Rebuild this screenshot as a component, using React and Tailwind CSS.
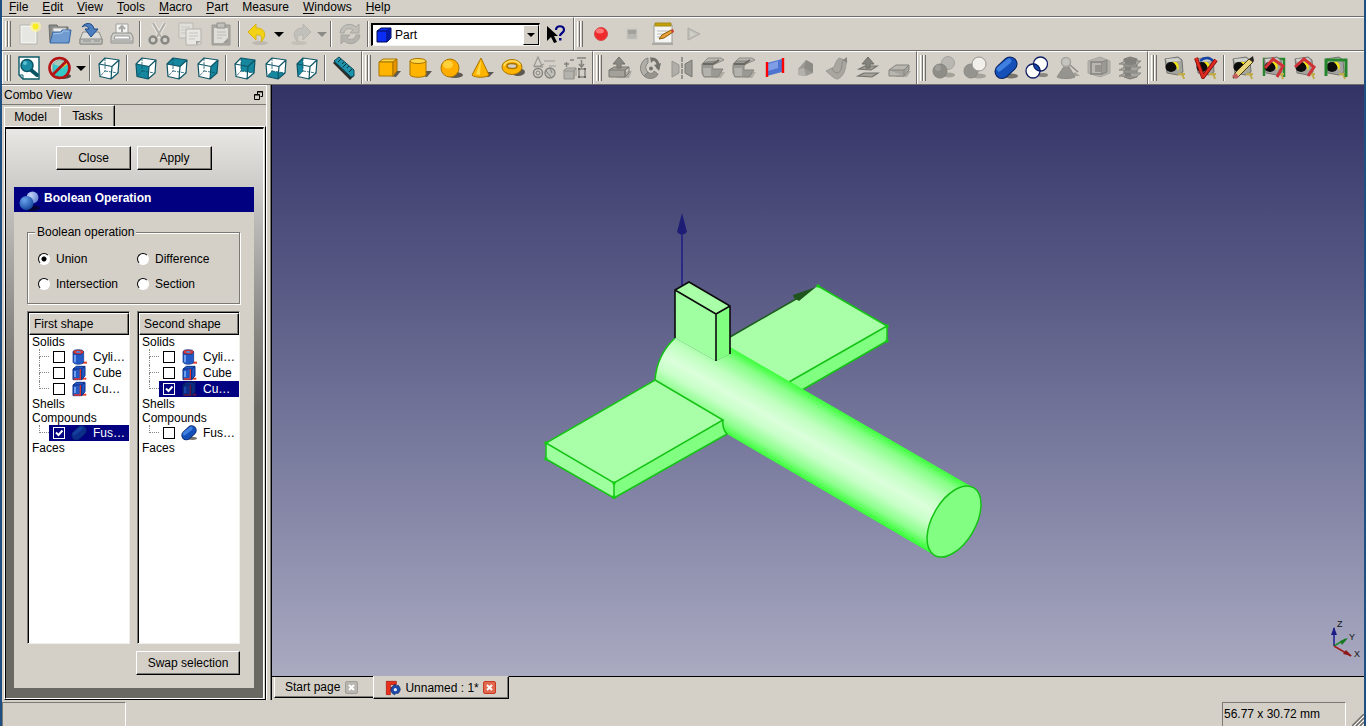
import { useState } from 'react';

const menus = [
    ['F', 'ile'],
    ['E', 'dit'],
    ['V', 'iew'],
    ['T', 'ools'],
    ['M', 'acro'],
    ['P', 'art'],
    ['', 'Measure'],
    ['W', 'indows'],
    ['H', 'elp'],
];

function Icon({ children, size = 'w-6 h-6' }) {
    return (
        <svg viewBox="0 0 24 24" className={`${size} shrink-0`} fill="none" aria-hidden="true">
            {children}
        </svg>
    );
}

/* ---------- file toolbar icons ---------- */

const NewIcon = () => (
    <Icon>
        <path d="M3 3h17v19H3z" fill="#f1f1ee" stroke="#b4b4af" />
        <path d="M5 5h13v15H5z" fill="#e6e6e3" />
        <circle cx="18.500" cy="4.500" r="5.500" fill="#fff59a" opacity=".7" />
        <circle cx="18.500" cy="4.500" r="3" fill="#f8ee20" />
    </Icon>
);

const OpenIcon = () => (
    <Icon>
        <path d="M1 3h8l1 2h10v15H2z" fill="#8a8c88" stroke="#6b6d69" />
        <path d="M5 6h13v6H5z" fill="#eeeeec" stroke="#aaa" />
        <path d="M5 10l8 0 1-2h9l-2 13H2z" fill="#6f9bd1" stroke="#3465a4" />
        <path d="M5 12l9-1 1-2h6" stroke="#a9c6ea" />
    </Icon>
);

const SaveIcon = () => (
    <Icon>
        <path d="M4 10h16l3 7v5H1v-5z" fill="#dcdcd9" stroke="#8b8d89" />
        <path d="M1 17h22v5H1z" fill="#c0c1bd" stroke="#8b8d89" />
        <path d="M4 19h8M15 19h6" stroke="#8e908c" />
        <path d="M3 5c3-5 11-5 12 2h4l-7 8-6-8h4C9 4 6 3 3 5z" fill="#4c7fc0" stroke="#204a87" />
    </Icon>
);

const PrintIcon = () => (
    <Icon>
        <path d="M6 2h12v11H6z" fill="#f4f4f2" stroke="#a0a09c" />
        <path d="M12 4v6M9 7l3-3 3 3" stroke="#a8a8a4" strokeWidth="2" />
        <path d="M3 11h18l2 4v6H1v-6z" fill="#d0d0cd" stroke="#8d8f8b" />
        <path d="M5 14h14l1 3H4z" fill="#fff" stroke="#999" />
        <path d="M2 19h20" stroke="#999b97" />
    </Icon>
);

const CutIcon = () => (
    <Icon>
        <path d="M6 1l8 14M18 1l-8 14" stroke="#ebe9e4" strokeWidth="4" />
        <path d="M6 1l8 14M18 1l-8 14" stroke="#b0aea9" strokeWidth="2" />
        <circle cx="6" cy="18" r="3.500" stroke="#868682" strokeWidth="2.400" />
        <circle cx="18" cy="18" r="3.500" stroke="#868682" strokeWidth="2.400" />
    </Icon>
);

const CopyIcon = () => (
    <Icon>
        <path d="M1 1h14v15H1z" fill="#e1dfda" stroke="#b9b7b1" />
        <path d="M3 5h9M3 8h9M3 11h7" stroke="#c9c7c1" />
        <path d="M8 7h15v15l-4 1H8z" fill="#e8e6e2" stroke="#b3b1ab" />
        <path d="M11 11h9M11 14h9M11 17h6" stroke="#c5c3bd" />
        <path d="M18 23v-4h5z" fill="#a9a7a1" />
    </Icon>
);

const PasteIcon = () => (
    <Icon>
        <path d="M3 3h18v20H3z" fill="#aaa8a2" stroke="#9c9a94" />
        <path d="M5 6h14v15H5z" fill="#dfddd8" />
        <path d="M8 1h8v5H8z" fill="#c2c0ba" stroke="#908e88" />
        <path d="M8 10h9M8 13h9M8 16h5" stroke="#bebcb6" />
        <path d="M14 21l5-5v5z" fill="#9b9993" />
    </Icon>
);

const UndoIcon = () => (
    <Icon>
        <ellipse cx="14" cy="21" rx="8" ry="2" fill="#bdb9b1" />
        <path d="M10 2L2 10l8 8v-5c5-1 7 2 5 7 6-6 5-14-5-14z" fill="#f3d216" stroke="#d6b40c" />
    </Icon>
);

const RedoIcon = () => (
    <Icon>
        <ellipse cx="10" cy="21" rx="8" ry="2" fill="#c4c0b8" />
        <path d="M14 2l8 8-8 8v-5c-5-1-7 2-5 7-6-6-5-14 5-14z" fill="#c2c0ba" stroke="#b6b4ae" />
    </Icon>
);

const RefreshIcon = () => (
    <Icon>
        <path d="M2 11c1-9 11-11 16-6l3-3v9h-9l3-3c-4-3-8-1-9 3z" fill="#c0beb8" stroke="#a8a6a0" />
        <path d="M22 13c-1 9-11 11-16 6l-3 3v-9h9l-3 3c4 3 8 1 9-3z" fill="#b5b3ad" stroke="#a8a6a0" />
    </Icon>
);

const WhatsThisIcon = () => (
    <Icon>
        <path d="M3 4v15l4-4 3 6 3-1-3-6h4z" fill="#000" />
        <path d="M12 8c0-5 8-5 8 0 0 3-4 3-4 6" stroke="#000080" strokeWidth="2.200" />
        <path d="M15 16h2.500v2.500H15z" fill="#000080" />
    </Icon>
);

const RecordIcon = () => (
    <Icon>
        <circle cx="12" cy="12" r="6.500" fill="#ee2a2a" stroke="#d64b4b" />
        <ellipse cx="11" cy="9" rx="4" ry="2.500" fill="#f77" />
    </Icon>
);

const StopIcon = () => (
    <Icon>
        <path d="M7 7h10v10H7z" fill="#b8b6b0" stroke="#c7c5bf" />
        <path d="M8 8h8v4H8z" fill="#a3a19b" />
    </Icon>
);

const EditMacroIcon = () => (
    <Icon>
        <path d="M3 3h18v18H3z" fill="#f5f5f3" stroke="#9a9a96" />
        <path d="M4 1h16v3H4z" fill="#c4a000" stroke="#a58c1c" />
        <path d="M1 21h21v2H1z" fill="#aaa8a2" />
        <path d="M6 9h11M6 12h8M6 15h5" stroke="#bbb" />
        <path d="M8 17l3-4 9-5 2 2-9 6z" fill="#e8a33d" stroke="#8f5902" />
        <path d="M20 8l2-1 1 3-2 1z" fill="#cc3b2b" />
    </Icon>
);

const PlayIcon = () => (
    <Icon>
        <path d="M6 6l12 6-12 6z" fill="#c2c0ba" stroke="#acaaa4" />
        <path d="M8 9l6 3-6 3z" fill="#d0cec8" />
    </Icon>
);

/* ---------- view toolbar icons ---------- */

const FitIcon = () => (
    <Icon>
        <path d="M2 1h20v22H6l-4-4z" fill="#fff" stroke="#0e5a68" strokeWidth="1.400" />
        <path d="M2 19h4v4" stroke="#0e5a68" />
        <path d="M14 14l6 5" stroke="#0b5565" strokeWidth="4" strokeLinecap="round" />
        <circle cx="10" cy="9.500" r="6" fill="#1a8ba3" stroke="#0b5565" strokeWidth="1.500" />
        <circle cx="8" cy="7" r="2" fill="#5cc0d2" />
    </Icon>
);

const DrawStyleIcon = () => (
    <Icon>
        <ellipse cx="15" cy="20" rx="8" ry="3" fill="#4a4a44" />
        <path d="M5 8l6-4 9 2v11l-5 4-10-2z" fill="#37c8c8" stroke="#5aa7a4" />
        <path d="M5 8l6-4 9 2-6 5z" fill="#a8c9bb" />
        <path d="M18 4l3 3-8 6z" fill="#f4c52b" />
        <circle cx="11.500" cy="12" r="10" stroke="#b41414" strokeWidth="2.600" />
        <path d="M4.500 19L18.500 5" stroke="#b41414" strokeWidth="2.600" />
    </Icon>
);

const cubeFaces = {
    front: 'M2 8L15 10.500L14 23L3 20.500z',
    top: 'M2 8L8 2L22 4L15 10.500z',
    right: 'M15 10.500L22 4L21 17L14 23z',
    rear: 'M8 2L22 4L21 17L8 15z',
    bottom: 'M3 20.500L14 23L21 17L8 15z',
    left: 'M2 8L8 2L8 15L3 20.500z',
};

function ViewCube({ face }) {
    return (
        <Icon>
            <path d="M2 8L8 2L22 4L21 17L14 23L3 20.500z" fill="#fff" />
            {face && <path d={cubeFaces[face]} fill="#15879f" />}
            <path d="M8 2V15L3 20.500M8 15L21 17" stroke="#0e5566" strokeWidth=".8" strokeDasharray="3 1" />
            <path d="M2 8L8 2L22 4L21 17L14 23L3 20.500zM2 8L15 10.500L14 23M15 10.500L22 4" stroke="#0e5566" strokeWidth="1.200" strokeLinejoin="round" />
        </Icon>
    );
}

const RulerIcon = () => (
    <Icon>
        <path d="M1 7l3-3 18 16-4 4z" fill="#2b2b28" />
        <path d="M2 5l5-4 15 13v6l-3 1z" fill="#1f93ab" stroke="#0b4856" />
        <path d="M9 3l-3 3M12 6l-2 2M14 8l-3 3M17 10l-2 2M20 13l-3 3" stroke="#06333d" />
    </Icon>
);

/* ---------- primitives ---------- */

const BoxIcon = () => (
    <Icon>
        <path d="M13 20l6-5h5l-5 6z" fill="#5c5952" />
        <path d="M2 6l4-3h14l-4 3z" fill="#ffd84a" stroke="#a87400" />
        <path d="M2 6h14v14H2z" fill="#ffb400" stroke="#a87400" />
        <path d="M16 6l4-3v12l-4 5z" fill="#e89400" stroke="#a87400" />
    </Icon>
);

const CylinderIcon = () => (
    <Icon>
        <path d="M14 20l4-5h6l-5 6z" fill="#5c5952" />
        <path d="M2 5v14c2 3 14 3 16 0V5z" fill="#ffb400" stroke="#a87400" />
        <ellipse cx="10" cy="5" rx="8" ry="2.500" fill="#ffd84a" stroke="#a87400" />
    </Icon>
);

const SphereIcon = () => (
    <Icon>
        <ellipse cx="16" cy="19" rx="8" ry="3" fill="#5c5952" />
        <circle cx="11" cy="12" r="9" fill="#ffae00" stroke="#a87400" />
        <ellipse cx="9" cy="8.500" rx="5" ry="4" fill="#ffd23c" />
    </Icon>
);

const ConeIcon = () => (
    <Icon>
        <path d="M12 20l6-4h6l-5 5z" fill="#5c5952" />
        <path d="M11 2L2 19c2 3 15 3 17 0z" fill="#ffb400" stroke="#a87400" />
        <path d="M11 4L6 18l4 1z" fill="#ffd84a" />
    </Icon>
);

const TorusIcon = () => (
    <Icon>
        <ellipse cx="17" cy="16" rx="7" ry="4" fill="#5c5952" />
        <ellipse cx="11" cy="11" rx="10" ry="7.500" fill="#ffb400" stroke="#a87400" />
        <ellipse cx="11" cy="10" rx="5" ry="2.500" fill="#d5d0c7" stroke="#a87400" strokeWidth="1.500" />
        <path d="M3 10c2-6 13-7 16-1" stroke="#ffdf6a" strokeWidth="1.500" />
    </Icon>
);

const PrimitivesIcon = () => (
    <Icon>
        <path d="M6 1L2 10h8zM2 11h9M12 5h11M17 10h7M12 8l-4 2" stroke="#9b9993" strokeWidth="1.200" />
        <circle cx="6" cy="17" r="4.500" stroke="#85837d" strokeWidth="1.500" />
        <circle cx="6" cy="17" r="2" stroke="#85837d" />
        <circle cx="18" cy="17" r="5" fill="#c2c0ba" stroke="#85837d" strokeWidth="1.300" />
        <path d="M14 15l5 6M18 12l2 5" stroke="#85837d" />
    </Icon>
);

const ShapeBuilderIcon = () => (
    <Icon>
        <path d="M1 8h5M3.500 6v5M7 4h4M14 2h9M18.500 4v6M16 8l2.500 3L21 8" stroke="#85837d" strokeWidth="1.500" />
        <path d="M1 14l3-2h9l-2 3v8H1z" fill="#b4b2ac" stroke="#96948e" />
        <path d="M1 15h10v8M11 15l2-3v8" stroke="#96948e" />
        <path d="M16 13h6v8h-6z" stroke="#85837d" strokeWidth="1.500" />
        <path d="M15 13h2M21 13h2M15 21h2M21 21h2" stroke="#666" strokeWidth="2" />
    </Icon>
);

/* ---------- part tools ---------- */

const ExtrudeIcon = () => (
    <Icon>
        <path d="M20 15h4l-3 7H8z" fill="#aeaba3" />
        <path d="M1 14l5-3h15l-4 3v7H1z" fill="#a3a19a" stroke="#7b7973" />
        <path d="M1 14h16v7M17 14l4-3v6l-4 4" stroke="#7b7973" />
        <path d="M9 12V8H5l6-7 6 7h-4v4z" fill="#8b8983" stroke="#74726c" />
    </Icon>
);

const RevolveIcon = () => (
    <Icon>
        <path d="M9 2C1 4-1 15 5 20l4-4c-3-2-3-7 0-9z" fill="#b0aea8" stroke="#85837d" />
        <path d="M5 20c4 4 12 3 14-2l-4-3c-1 3-4 3-6 1z" fill="#96948e" stroke="#85837d" />
        <path d="M13 3c5 0 7 5 6 10" stroke="#74726c" strokeWidth="3" />
        <path d="M15 9l7-2-2 8z" fill="#74726c" />
        <circle cx="12" cy="12.500" r="2" fill="#74726c" />
        <path d="M11 1l5 2-4 4z" fill="#74726c" />
    </Icon>
);

const MirrorIcon = () => (
    <Icon>
        <path d="M2 5l7 4v8l-7 4z" fill="#b0aea8" stroke="#96948e" />
        <path d="M22 4l-7 4v9l7 4z" fill="#9a9892" stroke="#7b7973" />
        <path d="M12 1v22" stroke="#7c7a74" strokeWidth="1.400" strokeDasharray="5 1" />
    </Icon>
);

function FilletIcon({ chamfer }) {
    return (
        <Icon>
            <path d="M10 21l5-5h9l-4 6z" fill="#aeaba3" />
            <path d="M1 8l6-6h13l3 2-9 4z" fill="#b9b7b1" stroke="#8e8c86" />
            <path d={chamfer ? 'M1 9l3-4h12l-4 5v4h10l-5 7H3L1 17z' : 'M1 8c4-3 9-2 13-3-2 3-3 5-2 8h10l-5 8H3L1 17z'} fill="#9b9993" stroke="#85837d" />
            <path d="M2 8h10l6-4" stroke="#6b6963" strokeWidth="2" />
            <path d="M2 12h8v8H3z" fill="#b4b2ac" />
        </Icon>
    );
}

const RuledIcon = () => (
    <Icon>
        <path d="M4 7l15-4v13L4 20z" fill="#4f74d0" />
        <path d="M5 8l10-3v7L5 15z" fill="#7f9de4" />
        <path d="M4 6v15M20 2v15" stroke="#f00" strokeWidth="2.400" />
    </Icon>
);

const LoftIcon = () => (
    <Icon>
        <path d="M4 13L12 4l7 4v9l-7 3-8-1z" fill="#9b9993" />
        <path d="M4 13l6-1 2 8-8-1z" fill="#b3b1ab" />
        <path d="M12 4l-2 8 9 5V8z" fill="#8d8b85" />
    </Icon>
);

const SweepIcon = () => (
    <Icon>
        <path d="M1 15l6-3c3 0 3-7 7-10l8 3c-2 3 0 13-9 18-4 0-6-3-12-8z" fill="#a8a69f" stroke="#9b9993" />
        <path d="M7 12c1 4 4 5 6 5 5-3 3-9 5-13" stroke="#8b8983" />
        <path d="M18 4l4-3v6z" fill="#85837d" />
    </Icon>
);

const OffsetIcon = () => (
    <Icon>
        <path d="M2 20l6-3h14l-6 4zM3 13l6-3h12l-6 4z" fill="#a3a19a" stroke="#74726c" strokeWidth="1.200" />
        <path d="M10 12V8H6l6-7 6 7h-4v4z" fill="#85837d" stroke="#6f6d67" />
    </Icon>
);

const ThicknessIcon = () => (
    <Icon>
        <path d="M18 15h6l-4 6H8z" fill="#aeaba3" />
        <path d="M2 14l7-5h13l-5 5v6H2z" fill="#b8b6b0" stroke="#85837d" />
        <path d="M2 14h15v6M17 14l5-5v5l-5 6" fill="#a5a39d" stroke="#85837d" />
    </Icon>
);

/* ---------- boolean tools ---------- */

const BooleanIcon = () => (
    <Icon>
        <ellipse cx="17" cy="19" rx="6" ry="2.500" fill="#a5a29a" />
        <circle cx="16" cy="7" r="6.500" fill="#b9b7b1" stroke="#a5a39d" />
        <circle cx="8" cy="15" r="7" fill="#8f8d87" stroke="#85837d" />
        <circle cx="6" cy="12" r="3" fill="#a19f99" />
    </Icon>
);

const SubtractIcon = () => (
    <Icon>
        <ellipse cx="16" cy="20" rx="7" ry="2.500" fill="#a5a29a" />
        <circle cx="8" cy="15" r="7" fill="#96948e" stroke="#8b8983" />
        <circle cx="16" cy="8" r="7" fill="#f1efe9" stroke="#96948e" />
    </Icon>
);

function FusionIcon({ size, dim }) {
    return (
        <Icon size={size}>
            {!dim && <ellipse cx="17" cy="20" rx="7" ry="2.500" fill="#77746c" />}
            <path d="M8 15.500L16 8" stroke={dim ? '#0a2270' : '#06205f'} strokeWidth="15" strokeLinecap="round" />
            <path d="M8 15.500L16 8" stroke={dim ? '#0b2d8a' : '#1450b8'} strokeWidth="13" strokeLinecap="round" />
            <path d="M5 13L15 5" stroke={dim ? '#153f9e' : '#3f7fe0'} strokeWidth="5" strokeLinecap="round" />
        </Icon>
    );
}

const CommonIcon = () => (
    <Icon>
        <ellipse cx="18" cy="19" rx="5" ry="2" fill="#8a877f" />
        <circle cx="15.500" cy="8" r="7" fill="#fff" stroke="#0f1f66" strokeWidth="1.300" />
        <circle cx="8" cy="15" r="7" fill="#fff" stroke="#0f1f66" strokeWidth="1.300" />
        <path d="M8.500 8a7 7 0 016.500 7 7 7 0 01-6.500-7z" fill="#1450b8" stroke="#0f1f66" strokeWidth="1.300" />
    </Icon>
);

const CheckGeometryIcon = () => (
    <Icon>
        <path d="M14 20h10l-5-4z" fill="#a5a29a" />
        <path d="M9 9L1 21c4 2 14 2 18 0L12 9z" fill="#96948e" stroke="#8e8c86" />
        <circle cx="10" cy="6" r="4.500" fill="#c6c4be" stroke="#a5a39d" strokeWidth="1.500" />
        <path d="M14 9l8 7" stroke="#8e8c86" strokeWidth="1.500" />
    </Icon>
);

const SectionIcon = () => (
    <Icon>
        <path d="M1 5l12-4 10 4v12l-10 4-12-4z" fill="#b4b2ac" stroke="#a8a6a0" />
        <path d="M4 6h11v12H4z" fill="#b8b6b0" stroke="#85837d" strokeWidth="1.500" />
        <path d="M8 9h6v7H8z" fill="#96948e" />
        <path d="M15 6l5-2v12l-5 2" fill="#9b9993" stroke="#85837d" />
    </Icon>
);

const CrossSectionsIcon = () => (
    <Icon>
        <path d="M6 3l6-2 7 2v18l-7 2-6-2z" fill="#96948e" stroke="#7b7973" />
        <path d="M1 8l6-3h16l-5 4zM1 14l6-3h16l-5 4zM1 20l6-3h16l-5 4z" fill="#a8a6a0" stroke="#8b8983" />
        <path d="M7 3l5-1 6 1v5l-5 1-6-1zM7 11h6v3H7zM7 17h6v3H7z" fill="#83817b" />
    </Icon>
);

/* ---------- measure tools ---------- */

const TapeBody = () => (
    <>
        <path d="M2 3l13-2 4 3 1 12-5 3-11-2z" fill="#a3a39f" stroke="#74746f" />
        <path d="M3 3l12-1 3 3-14 1z" fill="#d0d0cc" />
        <ellipse cx="8" cy="11" rx="5.500" ry="5" fill="#0c0c0c" />
        <path d="M10 6c5-1 7 4 5 9-1-4-2-6-5-9z" fill="#f2e30c" />
        <path d="M15 18l6 1M19 17l2 6M17 18h5" stroke="#c0ab4a" strokeWidth="2" />
    </>
);

function MeasureIcon({ kind }) {
    return (
        <Icon>
            {kind === 'all' && <path d="M2 20V3h20v18" stroke="#27862d" strokeWidth="2.500" />}
            <TapeBody />
            {kind === 'angular' && (
                <>
                    <path d="M6 5c4-4 10-4 13 0" stroke="#1645a8" strokeWidth="2.500" />
                    <path d="M2 2l7 19L22 4" stroke="#7b0c0c" strokeWidth="4" strokeLinejoin="round" />
                    <path d="M2 2l7 19L22 4" stroke="#e22b20" strokeWidth="2.400" strokeLinejoin="round" />
                </>
            )}
            {kind === 'clear' && (
                <>
                    <path d="M2 22l2-5L18 3l4 3L7 21z" fill="#e9d57c" stroke="#4d3d12" />
                    <path d="M18 3l4-3 1 5-1 1z" fill="#222" />
                    <path d="M1 20l4-3 3 4-3 2z" fill="#c25e62" />
                </>
            )}
            {kind === 'all' && <path d="M3 12L11 3l10 7-6 11" stroke="#cf3237" strokeWidth="3" />}
            {kind === 'toggle3d' && <path d="M2 11L11 3l10 8-6 9" stroke="#cf3237" strokeWidth="3" />}
            {kind === 'delta' && <path d="M2 20V4h20v17" stroke="#27862d" strokeWidth="3" />}
        </Icon>
    );
}

/* ---------- toolbar parts ---------- */

function ToolButton({ label, icon, disabled }) {
    return (
        <button type="button" aria-label={label} disabled={disabled} className="w-[31px] h-8 shrink-0 flex items-center justify-center">
            {icon}
        </button>
    );
}

function ArrowButton({ label, disabled }) {
    return (
        <button type="button" aria-label={label} disabled={disabled} className="w-3 h-8 shrink-0 flex items-center justify-center">
            <svg viewBox="0 0 10 5" className="w-[10px] h-[5px]" aria-hidden="true">
                <path d="M0 0h10L5 5z" fill={disabled ? '#8d8b86' : '#000'} />
            </svg>
        </button>
    );
}

const Separator = () => <div className="w-[2px] h-[26px] mx-[2px] shrink-0 border-l border-l-[#6f6d69] border-r border-r-white" />;

function Toolbar({ label, last, children }) {
    return (
        <div
            role="toolbar"
            aria-label={label}
            className={`flex items-center h-[33px] pl-[2px] border-l border-l-white border-t border-t-white ${last ? 'flex-1' : 'pr-[2px] border-r border-r-[#6f6d69]'}`}
        >
            <div className="flex w-[6px] h-[26px] mr-[2px] shrink-0">
                <span className="w-[3px] border-l border-l-white border-r border-r-[#6f6d69]" />
                <span className="w-[3px] border-l border-l-white border-r border-r-[#6f6d69]" />
            </div>
            {children}
        </div>
    );
}

const partTools = [
    ['Extrude', <ExtrudeIcon />],
    ['Revolve', <RevolveIcon />],
    ['Mirror', <MirrorIcon />],
    ['Fillet', <FilletIcon />],
    ['Chamfer', <FilletIcon chamfer />],
    ['Ruled surface', <RuledIcon />],
    ['Loft', <LoftIcon />],
    ['Sweep', <SweepIcon />],
    ['Offset', <OffsetIcon />],
    ['Thickness', <ThicknessIcon />],
];

const booleanTools = [
    ['Boolean', <BooleanIcon />],
    ['Cut', <SubtractIcon />],
    ['Union', <FusionIcon />],
    ['Common', <CommonIcon />],
    ['Check geometry', <CheckGeometryIcon />],
    ['Section', <SectionIcon />],
    ['Cross sections', <CrossSectionsIcon />],
];

const primitives = [
    ['Box', <BoxIcon />],
    ['Cylinder', <CylinderIcon />],
    ['Sphere', <SphereIcon />],
    ['Cone', <ConeIcon />],
    ['Torus', <TorusIcon />],
    ['Create primitives', <PrimitivesIcon />],
    ['Shape builder', <ShapeBuilderIcon />],
];

const renderTools = (tools) => tools.map(([label, icon]) => <ToolButton key={label} label={label} icon={icon} />);

function FileToolbars() {
    return (
        <div className="flex border-t border-t-[#6f6d69]">
            <Toolbar label="File">
                <ToolButton label="New" icon={<NewIcon />} />
                <ToolButton label="Open" icon={<OpenIcon />} />
                <ToolButton label="Save" icon={<SaveIcon />} />
                <ToolButton label="Print" icon={<PrintIcon />} />
                <Separator />
                <ToolButton label="Cut" icon={<CutIcon />} disabled />
                <ToolButton label="Copy" icon={<CopyIcon />} disabled />
                <ToolButton label="Paste" icon={<PasteIcon />} disabled />
                <Separator />
                <ToolButton label="Undo" icon={<UndoIcon />} />
                <ArrowButton label="Undo list" />
                <ToolButton label="Redo" icon={<RedoIcon />} disabled />
                <ArrowButton label="Redo list" disabled />
                <Separator />
                <ToolButton label="Refresh" icon={<RefreshIcon />} disabled />
                <Separator />
                <div className="relative w-[169px] h-[23px] border-t-2 border-l-2 border-black border-r border-b border-r-[#f4f2ee] border-b-[#f4f2ee]">
                    <select aria-label="Workbench" defaultValue="Part" className="appearance-none w-full h-full bg-white pl-[22px] text-black outline-none">
                        <option>Part</option>
                    </select>
                    <svg viewBox="0 0 16 16" className="absolute left-[3px] top-[2px] w-4 h-4 pointer-events-none" aria-hidden="true">
                        <path d="M1 4l4-3h10v10l-4 4H1z" fill="#0a2cf5" stroke="#000b4d" />
                        <path d="M1 4h10v11M11 4l4-3" stroke="#000b4d" fill="none" />
                        <path d="M11 4l4-3v10l-4 4z" fill="#0518a0" />
                    </svg>
                    <span className="absolute right-0 top-0 w-4 h-full bg-[#d4d0c8] border-t border-l border-white border-r border-b border-r-black border-b-black flex items-center justify-center pointer-events-none">
                        <svg viewBox="0 0 8 4" className="w-2 h-1" aria-hidden="true">
                            <path d="M0 0h8L4 4z" />
                        </svg>
                    </span>
                </div>
                <ToolButton label="What's this?" icon={<WhatsThisIcon />} />
            </Toolbar>
            <Toolbar label="Macro" last>
                <ToolButton label="Record macro" icon={<RecordIcon />} />
                <ToolButton label="Stop macro" icon={<StopIcon />} disabled />
                <ToolButton label="Macros" icon={<EditMacroIcon />} />
                <ToolButton label="Run macro" icon={<PlayIcon />} disabled />
            </Toolbar>
        </div>
    );
}

function PartToolbars() {
    return (
        <div className="flex border-t border-b border-[#6f6d69]">
            <Toolbar label="View">
                <ToolButton label="Fit all" icon={<FitIcon />} />
                <ToolButton label="Draw style" icon={<DrawStyleIcon />} />
                <ArrowButton label="Draw style list" />
                <Separator />
                <ToolButton label="Axonometric" icon={<ViewCube />} />
                <Separator />
                <ToolButton label="Front" icon={<ViewCube face="front" />} />
                <ToolButton label="Top" icon={<ViewCube face="top" />} />
                <ToolButton label="Right" icon={<ViewCube face="right" />} />
                <Separator />
                <ToolButton label="Rear" icon={<ViewCube face="rear" />} />
                <ToolButton label="Bottom" icon={<ViewCube face="bottom" />} />
                <ToolButton label="Left" icon={<ViewCube face="left" />} />
                <Separator />
                <ToolButton label="Measure distance" icon={<RulerIcon />} />
            </Toolbar>
            <Toolbar label="Solids">{renderTools(primitives)}</Toolbar>
            <Toolbar label="Part tools">{renderTools(partTools)}</Toolbar>
            <Toolbar label="Boolean">{renderTools(booleanTools)}</Toolbar>
            <Toolbar label="Measure" last>
                <ToolButton label="Measure linear" icon={<MeasureIcon kind="linear" />} />
                <ToolButton label="Measure angular" icon={<MeasureIcon kind="angular" />} />
                <Separator />
                <ToolButton label="Clear all" icon={<MeasureIcon kind="clear" />} />
                <ToolButton label="Toggle all" icon={<MeasureIcon kind="all" />} />
                <ToolButton label="Toggle 3D" icon={<MeasureIcon kind="toggle3d" />} />
                <ToolButton label="Toggle delta" icon={<MeasureIcon kind="delta" />} />
            </Toolbar>
        </div>
    );
}

/* ---------- combo view ---------- */

function PushButton({ className, children }) {
    return (
        <button type="button" className={`h-6 bg-[#d4d0c8] border-t border-l border-t-white border-l-white border-r border-b border-r-black border-b-black shadow-[inset_-1px_-1px_0_#7b7974] ${className}`}>
            {children}
        </button>
    );
}

const CylinderItem = ({ dim }) => (
    <Icon size="w-4 h-4">
        <path d="M16 19h8v3h-8z" fill="#e0442e" />
        <path d="M3 5v15c2 4 14 4 16 0V5z" fill={dim ? '#0b2d8a' : '#2259c4'} stroke="#0a2f86" />
        <ellipse cx="11" cy="4.500" rx="8" ry="3.500" fill="#e0352a" stroke="#0a2f86" />
        <ellipse cx="11" cy="4.500" rx="4" ry="1.500" fill="#4f86dd" />
        <path d="M6 9v11" stroke="#6fa0f0" strokeWidth="3" />
    </Icon>
);

const CubeItem = ({ dim }) => (
    <Icon size="w-4 h-4">
        <path d="M14 19h9v3h-9z" fill={dim ? '#641640' : '#e0442e'} />
        <path d="M3 6l5-4h13v14l-5 6H3z" fill={dim ? '#0b2d8a' : '#2259c4'} stroke={dim ? '#0a2060' : '#0a2f86'} strokeWidth="1.500" />
        <path d="M3 6h13v16M16 6l5-4" stroke={dim ? '#0a2060' : '#0a2f86'} strokeWidth="1.500" />
        <path d="M14 6v15H4" stroke={dim ? '#641640' : '#e0352a'} strokeWidth="2" />
        <path d="M6 9v9" stroke={dim ? '#1c47a8' : '#6fa0f0'} strokeWidth="3" />
    </Icon>
);

const itemIcons = { cylinder: CylinderItem, cube: CubeItem, fusion: ({ dim }) => <FusionIcon size="w-4 h-4" dim={dim} /> };

const shapes = [
    { name: 'Solids', items: [['a', 'Cyli…', 'cylinder'], ['b', 'Cube', 'cube'], ['c', 'Cu…', 'cube']] },
    { name: 'Shells', items: [] },
    { name: 'Compounds', items: [['d', 'Fus…', 'fusion']] },
    { name: 'Faces', items: [] },
];

function ShapeTree({ title, initial }) {
    const [selected, setSelected] = useState(initial);

    return (
        <div className="flex-1 min-w-0 flex flex-col border-t border-l border-[#7b7974] border-r border-b border-r-[#f1efea] border-b-[#f1efea]">
            <div className="flex-1 bg-white border-t border-l border-black">
                <div className="h-[22px] leading-[20px] pl-1 bg-[#d4d0c8] border-t border-l border-white border-r border-b border-r-black border-b-black shadow-[inset_-1px_-1px_0_#7b7974]">{title}</div>
                {shapes.map((group) => (
                    <div key={group.name}>
                        <div className="h-[14px] leading-[14px] pl-[3px]">{group.name}</div>
                        {group.items.map(([id, text, type], i) => {
                            const active = id === selected;
                            const ItemIcon = itemIcons[type];
                            return (
                                <div key={id} className="flex h-4 pl-[10px]">
                                    <div className="w-[10px] shrink-0 flex flex-col">
                                        <span className="h-2 border-l border-b border-dotted border-[#8a8884]" />
                                        <span className={`h-2 ${i < group.items.length - 1 ? 'border-l border-dotted border-[#8a8884]' : ''}`} />
                                    </div>
                                    <label className={`flex-1 min-w-0 flex items-center pl-1 whitespace-nowrap leading-4 ${active ? 'bg-[#000080] text-white' : ''}`}>
                                        <input
                                            type="checkbox"
                                            checked={active}
                                            onChange={() => setSelected(active ? null : id)}
                                            className="appearance-none w-3 h-3 shrink-0 border border-black bg-white checked:border-white checked:bg-[#000080] peer"
                                        />
                                        <svg viewBox="0 0 12 12" className="hidden peer-checked:block w-3 h-3 -ml-3 shrink-0 pointer-events-none" fill="none" aria-hidden="true">
                                            <path d="M3 5.500l2.500 2.500L9.500 3.500" stroke="#fff" strokeWidth="2" />
                                        </svg>
                                        <span className="px-[6px] shrink-0"><ItemIcon dim={active} /></span>
                                        {text}
                                    </label>
                                </div>
                            );
                        })}
                    </div>
                ))}
            </div>
        </div>
    );
}

function BooleanPanel() {
    const [operation, setOperation] = useState('Union');

    return (
        <section className="flex-1 min-h-0 flex flex-col bg-[#d4d0c8]">
            <h2 className="h-[25px] shrink-0 flex items-center gap-[2px] pl-1 bg-[#000080] text-white font-bold leading-[23px]">
                <Icon>
                    <defs>
                        <radialGradient id="ball" cx=".35" cy=".3" r=".8">
                            <stop offset="0" stopColor="#6ba3ee" />
                            <stop offset="1" stopColor="#0c3f96" />
                        </radialGradient>
                        <radialGradient id="paleBall" cx=".35" cy=".3" r=".8">
                            <stop offset="0" stopColor="#c3d2f7" />
                            <stop offset="1" stopColor="#5d7ccc" />
                        </radialGradient>
                    </defs>
                    <ellipse cx="14" cy="20" rx="8" ry="3" fill="#04043c" />
                    <circle cx="14.500" cy="9.500" r="6" fill="url(#paleBall)" />
                    <circle cx="8.500" cy="15" r="7" fill="url(#ball)" />
                </Icon>
                <span className="h-[25px]">Boolean Operation</span>
            </h2>
            <div className="flex-1 min-h-0 flex flex-col py-[13px] pl-[13px] pr-[14px]">
                <fieldset className="shrink-0 border border-[#7b7974] pl-[7px] pr-[3px] pb-[7px] shadow-[1px_1px_0_#fff,inset_1px_1px_0_#fff]">
                    <legend className="px-[2px] leading-[14px] bg-[#d4d0c8]">Boolean operation</legend>
                    <div className="grid grid-cols-2 pl-[3px] pt-[7px]">
                        {['Union', 'Difference', 'Intersection', 'Section'].map((name) => (
                            <label key={name} className="flex items-center gap-[6px] h-[25px]">
                                <input
                                    type="radio"
                                    name="operation"
                                    checked={operation === name}
                                    onChange={() => setOperation(name)}
                                    className="appearance-none w-3 h-3 rounded-full bg-white border border-t-black border-l-black border-r-white border-b-white checked:bg-[radial-gradient(circle,#000_2px,#fff_3px)]"
                                />
                                {name}
                            </label>
                        ))}
                    </div>
                </fieldset>
                <div className="flex-1 min-h-0 flex gap-[7px] mt-[7px]">
                    <ShapeTree title="First shape" initial="d" />
                    <ShapeTree title="Second shape" initial="c" />
                </div>
                <PushButton className="self-end shrink-0 w-[104px] mt-[7px]">Swap selection</PushButton>
            </div>
        </section>
    );
}

function ComboView() {
    return (
        <aside className="w-[265px] shrink-0 flex flex-col border-t border-r border-white">
            <div className="h-[19px] shrink-0 flex items-center justify-between pl-[2px] pr-[3px] border-b border-b-[#7b7974]">
                <span>Combo View</span>
                <button type="button" aria-label="Float panel" className="w-[9px] h-[9px]">
                    <svg viewBox="0 0 9 9" className="w-[9px] h-[9px]" fill="none" aria-hidden="true">
                        <path d="M3.500 3V.5h5v5H6.500M3 1h6M.5 3.500h5v5h-5zM.5 4h5" stroke="#000" />
                    </svg>
                </button>
            </div>
            <div role="tablist" className="h-[21px] shrink-0 flex items-end pl-[2px]">
                <button type="button" role="tab" aria-selected="false" className="w-14 h-[19px] pr-[3px] border-t border-l border-r border-white">Model</button>
                <button type="button" role="tab" aria-selected="true" className="w-[55px] h-[21px] pb-px border-t border-l border-white border-r border-r-black shadow-[inset_-1px_0_0_#7b7974]">Tasks</button>
            </div>
            <div className="flex-1 min-h-0 flex flex-col ml-[2px] pr-px border-t border-l border-white border-r border-b border-r-black border-b-black">
                <div className="flex-1 min-h-0 flex flex-col pt-[17px] pb-[10px] pl-2 pr-[9px] border-t-2 border-l border-black border-r border-b border-r-white border-b-white bg-[linear-gradient(#e9e7e3_0px,#cbcac6_60px,#8c8b87_190px,#696863_280px)]">
                    <div className="flex justify-center gap-[6px] mb-[17px]">
                        <PushButton className="w-[75px]">Close</PushButton>
                        <PushButton className="w-[75px]">Apply</PushButton>
                    </div>
                    <BooleanPanel />
                </div>
            </div>
        </aside>
    );
}

/* ---------- 3D view ---------- */

const corners = [[818, 286], [887, 326], [887, 341], [546, 443], [546, 459], [614, 497], [614, 483]];

function Scene() {
    return (
        <svg viewBox="272 85 1092 591" className="w-full h-full" fill="none" role="img" aria-label="Fused model">
            <defs>
                <linearGradient id="tube" gradientUnits="userSpaceOnUse" x1="973.500" y1="487.700" x2="934.500" y2="555.300">
                    <stop offset="0" stopColor="#3dff3d" />
                    <stop offset=".12" stopColor="#86ff86" />
                    <stop offset=".32" stopColor="#c0ffc0" />
                    <stop offset=".52" stopColor="#dbffdb" />
                    <stop offset=".68" stopColor="#c8ffc8" />
                    <stop offset=".86" stopColor="#8cff8c" />
                    <stop offset="1" stopColor="#32ff32" />
                </linearGradient>
            </defs>

            {/* rear wing */}
            <path d="M730 337L818 286L887 326L789 382L730 350z" fill="#a8ffa8" />
            <path d="M789 382L887 326V341L802 390z" fill="#80ff80" />
            <path d="M818 286L887 326V341L802 390M789 382L887 326" stroke="#14c314" strokeWidth="1.500" />
            <path d="M730 337L803 295" stroke="#1e5c1e" strokeWidth="1.500" />
            <path d="M816 287L793 295L794 298L799 301z" fill="#1d551d" />

            {/* fuselage */}
            <path d="M655 380Q657 355 675 338L716 361L730 354V347L973.500 487.700L934.500 555.300L727 434Q722 428 723 420z" fill="url(#tube)" />
            <path d="M655 380Q657 355 675 338" stroke="#14c314" strokeWidth="1.500" />
            <ellipse cx="954" cy="521.500" rx="39" ry="21.500" transform="rotate(-60 954 521.500)" fill="#82ff82" stroke="#14c314" strokeWidth="1.500" />

            {/* front wing */}
            <path d="M655 380L723 420L614 483L546 443z" fill="#a8ffa8" />
            <path d="M546 443L614 483V498L546 459z" fill="#9eff9e" />
            <path d="M614 483L723 420Q722 429 727 434L614 498z" fill="#80ff80" />
            <path d="M655 380L723 420L614 483L546 443zM546 443V459L614 498V483M614 498L727 434Q722 429 723 420" stroke="#14c314" strokeWidth="1.500" />
            {corners.map(([x, y]) => (
                <rect key={`${x}-${y}`} x={x - 1.5} y={y - 1.5} width="3" height="3" fill="#0fd00f" />
            ))}

            {/* fin */}
            <path d="M682 286V233" stroke="#1c1c86" strokeWidth="1.500" />
            <path d="M682 213L687 232Q682 237 677 232z" fill="#1d1d75" />
            <path d="M675 290L689 282L730 306L716 314z" fill="#a8ffa8" />
            <path d="M675 290L716 314V361L675 338z" fill="#a0ffa0" />
            <path d="M716 314L730 306V354L716 361z" fill="#80ff80" />
            <path d="M675 338V290L689 282L730 306V354M675 290L716 314V361M716 314L730 306" stroke="#0c0c0c" strokeWidth="1.600" />

            {/* axis cross */}
            <path d="M1334 646V628" stroke="#1c1c96" strokeWidth="1.500" />
            <path d="M1334 627L1337 635H1331z" fill="#1c1c86" />
            <path d="M1334 646L1346 639" stroke="#1c8a2c" strokeWidth="1.500" />
            <path d="M1348 638L1342 645L1340 641z" fill="#187824" />
            <path d="M1334 646L1351 656" stroke="#a01c1c" strokeWidth="1.500" />
            <path d="M1352 656L1343 654L1346 650z" fill="#8c1818" />
            <g fill="#111" fontSize="9" fontFamily="Liberation Sans, sans-serif">
                <text x="1337" y="627">Z</text>
                <text x="1349" y="640">Y</text>
                <text x="1354" y="657">X</text>
            </g>
        </svg>
    );
}

function CloseTab({ label, active }) {
    return (
        <button
            type="button"
            aria-label={label}
            className={`w-[13px] h-[13px] rounded-[2px] border flex items-center justify-center ${active ? 'bg-[#e0694f] border-[#c8371f]' : 'bg-[#b9b7b0] border-[#a09e98]'}`}
        >
            <svg viewBox="0 0 7 7" className="w-[7px] h-[7px]" aria-hidden="true">
                <path d="M1 1l5 5M6 1L1 6" stroke="#fff" strokeWidth="2" />
            </svg>
        </button>
    );
}

function Workspace() {
    return (
        <main className="flex-1 min-w-0 flex flex-col ml-1 border-l border-black shadow-[-1px_0_0_#7b7974]">
            <div className="flex-1 min-h-0 bg-linear-to-b from-[#333366] to-[#aaaac1]">
                <Scene />
            </div>
            <div className="h-6 shrink-0 flex items-start border-t border-black pl-[2px]">
                <div className="h-[21px] flex items-center gap-[5px] pl-[10px] pr-[15px] border-l border-white border-b border-b-black shadow-[inset_0_-1px_0_#7b7974]">
                    <button type="button">Start page</button>
                    <CloseTab label="Close start page" />
                </div>
                <div className="h-[23px] -mt-px flex items-center gap-[4px] pl-[11px] pr-3 bg-[#d4d0c8] border-t border-l border-t-[#d4d0c8] border-l-white border-r border-b border-r-black border-b-black shadow-[inset_-1px_-1px_0_#7b7974]">
                    <Icon size="w-4 h-4">
                        <path d="M2 2h15v5H8v4h6v4H8v7H2z" fill="#e8301c" stroke="#a01208" />
                        <path d="M14 7l2 0 1 2 3-1 2 3 1 3-1 3-2 3-3 0-3 2-3-2-2-3 0-4 2-3z" fill="#1d4aa8" stroke="#0c2968" />
                        <circle cx="15.500" cy="14.500" r="2.500" fill="#e6eaf4" />
                    </Icon>
                    <button type="button">Unnamed : 1*</button>
                    <CloseTab label="Close document" active />
                </div>
            </div>
        </main>
    );
}

export default function App() {
    return (
        <div className="h-screen flex flex-col overflow-hidden bg-[#d4d0c8] border-x-2 border-[#1f4f80] font-['Liberation_Sans',Arial,sans-serif] text-[12px] leading-[14px] text-black select-none">
            <nav className="h-4 shrink-0 flex items-start">
                {menus.map(([key, rest]) => (
                    <button key={rest} type="button" className="h-[14px] px-[7px]">
                        {key && <span className="underline underline-offset-2">{key}</span>}
                        {rest}
                    </button>
                ))}
            </nav>
            <FileToolbars />
            <PartToolbars />
            <div className="flex-1 min-h-0 flex">
                <ComboView />
                <Workspace />
            </div>
            <footer className="h-[26px] shrink-0 flex items-stretch pt-[2px]">
                <div className="w-[124px] border-t border-l border-[#7b7974] border-r border-r-white" />
                <div className="ml-auto w-[124px] flex items-center pl-px pb-[2px] border-t border-l border-[#7b7974] border-r border-r-white">56.77 x 30.72 mm</div>
                <svg viewBox="0 0 12 12" className="w-3 h-3 ml-[6px] self-end" aria-hidden="true">
                    <path d="M0 12L12 0M4 12l8-8M8 12l4-4" stroke="#6f6d69" strokeWidth="1.500" />
                    <path d="M2 12L12 2M6 12l6-6M10 12l2-2" stroke="#fff" />
                </svg>
            </footer>
        </div>
    );
}
